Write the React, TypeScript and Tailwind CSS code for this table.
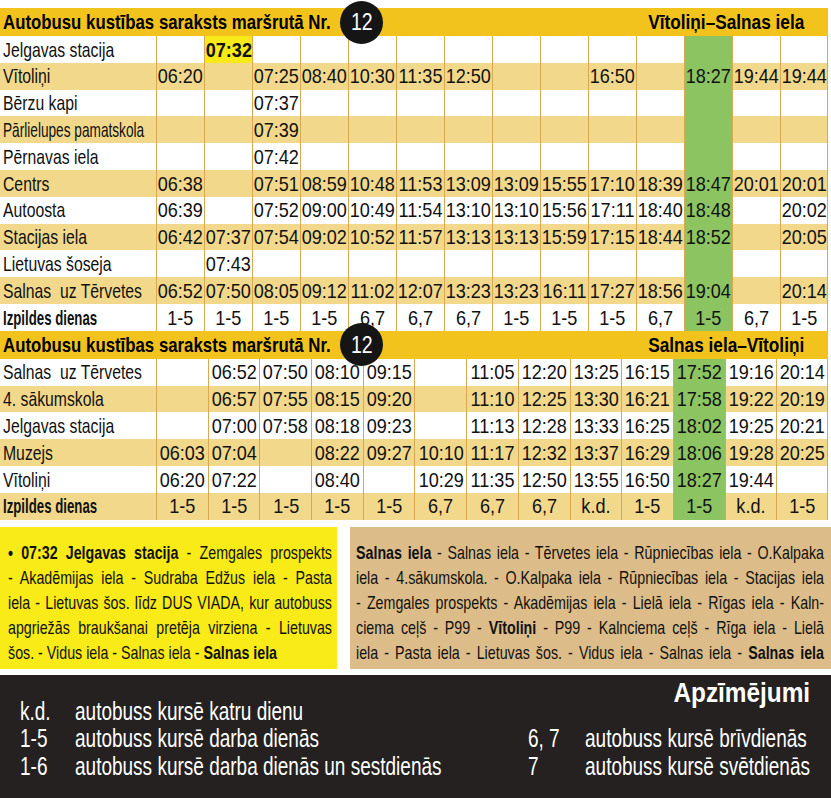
import React from 'react';

const F = "font-['Liberation_Sans',Arial,sans-serif]";

type Row = { name: string; times: string[]; narrow?: boolean };

const table1: Row[] = [
  { name: 'Jelgavas stacija', times: ['', '07:32', '', '', '', '', '', '', '', '', '', '', '', ''] },
  { name: 'Vītoliņi', times: ['06:20', '', '07:25', '08:40', '10:30', '11:35', '12:50', '', '', '16:50', '', '18:27', '19:44', '19:44'] },
  { name: 'Bērzu kapi', times: ['', '', '07:37', '', '', '', '', '', '', '', '', '', '', ''] },
  { name: 'Pārlielupes pamatskola', times: ['', '', '07:39', '', '', '', '', '', '', '', '', '', '', ''], narrow: true },
  { name: 'Pērnavas iela', times: ['', '', '07:42', '', '', '', '', '', '', '', '', '', '', ''] },
  { name: 'Centrs', times: ['06:38', '', '07:51', '08:59', '10:48', '11:53', '13:09', '13:09', '15:55', '17:10', '18:39', '18:47', '20:01', '20:01'] },
  { name: 'Autoosta', times: ['06:39', '', '07:52', '09:00', '10:49', '11:54', '13:10', '13:10', '15:56', '17:11', '18:40', '18:48', '', '20:02'] },
  { name: 'Stacijas iela', times: ['06:42', '07:37', '07:54', '09:02', '10:52', '11:57', '13:13', '13:13', '15:59', '17:15', '18:44', '18:52', '', '20:05'] },
  { name: 'Lietuvas šoseja', times: ['', '07:43', '', '', '', '', '', '', '', '', '', '', '', ''] },
  { name: 'Salnas  uz Tērvetes', times: ['06:52', '07:50', '08:05', '09:12', '11:02', '12:07', '13:23', '13:23', '16:11', '17:27', '18:56', '19:04', '', '20:14'] },
];
const days1 = ['1-5', '1-5', '1-5', '1-5', '6,7', '6,7', '6,7', '1-5', '1-5', '1-5', '6,7', '1-5', '6,7', '1-5'];

const table2: Row[] = [
  { name: 'Salnas  uz Tērvetes', times: ['', '06:52', '07:50', '08:10', '09:15', '', '11:05', '12:20', '13:25', '16:15', '17:52', '19:16', '20:14'] },
  { name: '4. sākumskola', times: ['', '06:57', '07:55', '08:15', '09:20', '', '11:10', '12:25', '13:30', '16:21', '17:58', '19:22', '20:19'] },
  { name: 'Jelgavas stacija', times: ['', '07:00', '07:58', '08:18', '09:23', '', '11:13', '12:28', '13:33', '16:25', '18:02', '19:25', '20:21'] },
  { name: 'Muzejs', times: ['06:03', '07:04', '', '08:22', '09:27', '10:10', '11:17', '12:32', '13:37', '16:29', '18:06', '19:28', '20:25'] },
  { name: 'Vītoliņi', times: ['06:20', '07:22', '', '08:40', '', '10:29', '11:35', '12:50', '13:55', '16:50', '18:27', '19:44', ''] },
];
const days2 = ['1-5', '1-5', '1-5', '1-5', '1-5', '6,7', '6,7', '6,7', 'k.d.', '1-5', '1-5', 'k.d.', '1-5'];

// condensed look: the poster uses a condensed face, we squeeze Arial-metric text
function Sq({ children, className }: { children: React.ReactNode; className: string }) {
  return <span className={`inline-block whitespace-pre ${className}`}>{children}</span>;
}

function Header({ route }: { route: string }) {
  return (
    <div className="relative flex h-[28px] w-[828px] items-center justify-between bg-[#f2c31c] pl-[3px] pr-[24px] text-[21px] font-bold text-black">
      <Sq className="origin-left scale-x-[0.8]">Autobusu kustības saraksts maršrutā Nr.</Sq>
      <Sq className="origin-right scale-x-[0.82]">{route}</Sq>
      <div className="absolute left-[340px] top-[-7.5px] z-10 flex h-[43px] w-[43px] items-center justify-center rounded-full bg-[#151515] text-[23px] font-normal text-white">
        <Sq className="origin-center scale-x-[0.85]">12</Sq>
      </div>
    </div>
  );
}

function Table({
  rows,
  days,
  green,
  cols,
  hl,
}: {
  rows: Row[];
  days: string[];
  green: number;
  cols: string;
  hl?: boolean;
}) {
  const all = [...rows.map((r) => ({ ...r, days: false })), { name: 'Izpildes dienas', times: days, days: true, narrow: false }];
  return (
    <div className={`grid w-[828px] ${cols}`}>
      {all.map((row, ri) => {
        const bg = ri % 2 === 1 ? 'bg-[#f1d88b]' : 'bg-white';
        let nameSq = 'origin-left scale-x-[0.75]';
        if (row.narrow) nameSq = 'origin-left scale-x-[0.65]';
        if (row.days) nameSq = 'origin-left scale-x-[0.63] font-bold';
        return (
          <React.Fragment key={ri}>
            <div className={`flex h-[26.8px] items-center overflow-visible pl-[3px] text-[21px] ${bg}`}>
              <Sq className={nameSq}>{row.name}</Sq>
            </div>
            {row.times.map((t, ci) => {
              const isHl = hl && ri === 0 && t === '07:32';
              let cellBg = bg;
              if (ci === green) cellBg = 'bg-[#8cc462]';
              if (isHl) cellBg = 'bg-[#f8ea19]';
              return (
                <div
                  key={ci}
                  className={`flex h-[26.8px] items-center justify-center border-l border-[#d9a852] text-[21px] ${cellBg} ${
                    isHl ? 'font-bold' : ''
                  } ${ci === row.times.length - 1 ? 'border-r' : ''}`}
                >
                  {t && <Sq className="origin-center scale-x-[0.86]">{t}</Sq>}
                </div>
              );
            })}
          </React.Fragment>
        );
      })}
    </div>
  );
}

function JLine({ children, last, w }: { children: React.ReactNode; last?: boolean; w: string }) {
  return (
    <div
      className={`origin-left scale-x-[0.75] ${w} ${last ? 'text-left' : 'text-justify [text-align-last:justify]'}`}
    >
      {children}
    </div>
  );
}

export default function App() {
  return (
    <div className={`w-[831px] overflow-hidden bg-white pt-[8px] text-[#111] ${F}`}>
      <Header route="Vītoliņi–Salnas iela" />
      <Table rows={table1} days={days1} green={11} cols="grid-cols-[156px_repeat(14,48px)]" hl />
      <Header route="Salnas iela–Vītoliņi" />
      <Table rows={table2} days={days2} green={10} cols="grid-cols-[156px_repeat(13,minmax(0,1fr))]" />

      <div className="mt-[7px] flex h-[142px] justify-between">
        <div className="w-[337px] bg-[#f8eb17] pl-[8px] pt-[13px] text-[19px] leading-[25px]">
          <JLine w="w-[432px]">
            <b>• 07:32 Jelgavas stacija</b> - Zemgales prospekts
          </JLine>
          <JLine w="w-[432px]">- Akadēmijas iela - Sudraba Edžus iela - Pasta</JLine>
          <JLine w="w-[432px]">iela - Lietuvas šos. līdz DUS VIADA, kur autobuss</JLine>
          <JLine w="w-[432px]">apgriežās braukšanai pretēja virziena - Lietuvas</JLine>
          <JLine w="w-[432px]" last>
            šos. - Vidus iela - Salnas iela - <b>Salnas iela</b>
          </JLine>
        </div>
        <div className="w-[481px] bg-[#dcbc88] pl-[6px] pt-[13px] text-[19px] leading-[25px]">
          <JLine w="w-[624px]">
            <b>Salnas iela</b> - Salnas iela - Tērvetes iela - Rūpniecības iela - O.Kalpaka
          </JLine>
          <JLine w="w-[624px]">iela - 4.sākumskola. - O.Kalpaka iela - Rūpniecības iela - Stacijas iela</JLine>
          <JLine w="w-[624px]">- Zemgales prospekts - Akadēmijas iela - Lielā iela - Rīgas iela - Kaln-</JLine>
          <JLine w="w-[624px]">
            ciema ceļš - P99 - <b>Vītoliņi</b> - P99 - Kalnciema ceļš - Rīga iela - Lielā
          </JLine>
          <JLine w="w-[624px]">
            iela - Pasta iela - Lietuvas šos. - Vidus iela - Salnas iela - <b>Salnas iela</b>
          </JLine>
        </div>
      </div>

      <div className="mt-[6px] h-[123px] bg-[#242120] px-[20px] pt-[6px] text-white">
        <div className="flex h-[17px] justify-end pr-[1px] text-[28px] font-bold leading-[24px]">
          <Sq className="origin-right scale-x-[0.87]">Apzīmējumi</Sq>
        </div>
        <div className="grid grid-cols-[55px_453px_57px_200px] text-[25px] leading-[27.5px]">
          <Sq className="origin-left scale-x-[0.76]">k.d.</Sq>
          <Sq className="origin-left scale-x-[0.76]">autobuss kursē katru dienu</Sq>
          <span />
          <span />
          <Sq className="origin-left scale-x-[0.76]">1-5</Sq>
          <Sq className="origin-left scale-x-[0.76]">autobuss kursē darba dienās</Sq>
          <Sq className="origin-left scale-x-[0.76]">6, 7</Sq>
          <Sq className="origin-left scale-x-[0.76]">autobuss kursē brīvdienās</Sq>
          <Sq className="origin-left scale-x-[0.76]">1-6</Sq>
          <Sq className="origin-left scale-x-[0.76]">autobuss kursē darba dienās un sestdienās</Sq>
          <Sq className="origin-left scale-x-[0.76]">7</Sq>
          <Sq className="origin-left scale-x-[0.76]">autobuss kursē svētdienās</Sq>
        </div>
      </div>
    </div>
  );
}
